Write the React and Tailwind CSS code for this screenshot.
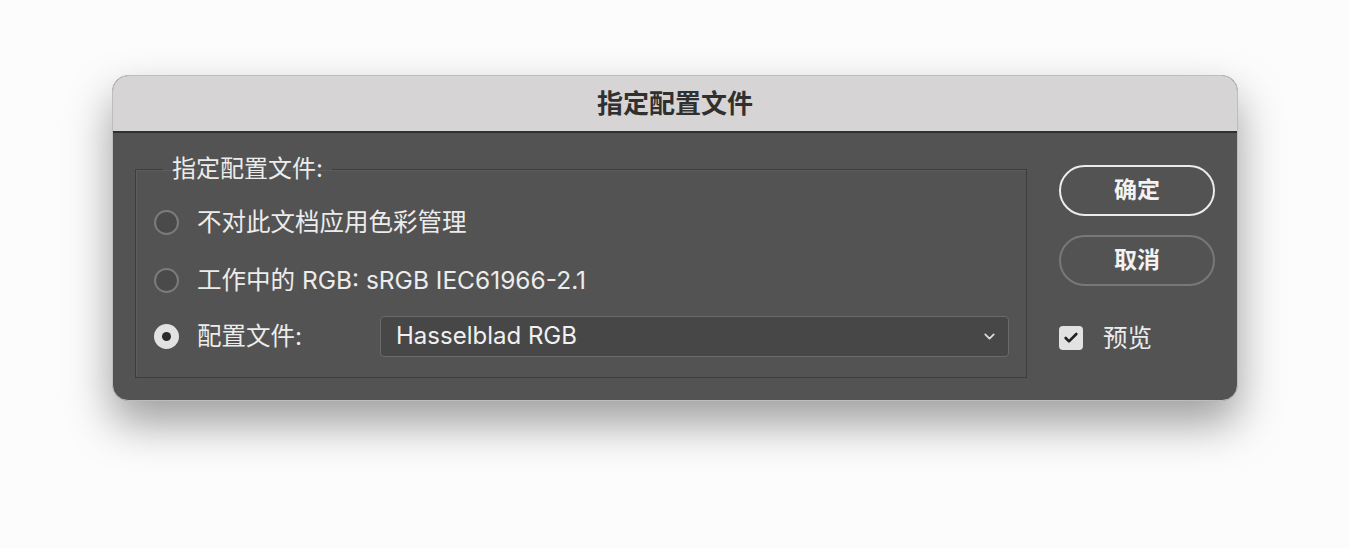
import React, { useState } from "react"
import { ChevronDown, Check } from "lucide-react"

const font = { fontFamily: 'Inter, "Noto Sans CJK SC", sans-serif' }

function Radio({ checked }) {
  return checked ? (
    <span className="flex h-[25px] w-[25px] shrink-0 items-center justify-center rounded-full bg-[#e2e2e2]">
      <span className="h-[9px] w-[9px] rounded-full bg-[#2b2b2b]" />
    </span>
  ) : (
    <span className="h-[25px] w-[25px] shrink-0 rounded-full border-2 border-[#7b7b7b] bg-[#4a4a4a]" />
  )
}

export default function App() {
  const [choice, setChoice] = useState(2)
  const [preview, setPreview] = useState(true)

  const rows = ["不对此文档应用色彩管理", "工作中的 RGB: sRGB IEC61966-2.1"]

  return (
    <div className="h-[548px] w-[1350px] bg-[#fcfcfc] pl-[112px] pt-[75px]" style={font}>
      <div className="w-[1126px] overflow-hidden rounded-[16px] border border-[#bdbdbd] bg-[#535353] shadow-[0_22px_45px_rgba(0,0,0,0.38)]">
        {/* Title bar */}
        <div className="flex h-[57px] items-center justify-center border-b-2 border-[#2f2f2f] bg-[#d6d4d5]">
          <h1 className="text-[26px] font-bold text-[#303030]">指定配置文件</h1>
        </div>

        <div className="flex px-[22px] pb-[22px] pt-[22px]">
          {/* Group */}
          <fieldset className="h-[223px] w-[894px] border border-[#3d3d3d] pl-[18px] shadow-[inset_1px_1px_0_#5d5d5d]">
            <legend className="ml-[9px] px-[9px] text-[24px] leading-[28px] text-[#ececec]">指定配置文件:</legend>
            <div className="flex flex-col pt-[10px]">
              {rows.map((label, i) => (
                <button
                  key={i}
                  onClick={() => setChoice(i)}
                  className="flex h-[58px] items-center gap-[18px] text-left text-[24.5px] text-[#ececec]"
                >
                  <Radio checked={choice === i} />
                  <span>{label}</span>
                </button>
              ))}
              <div className="flex h-[54px] items-center">
                <button
                  onClick={() => setChoice(2)}
                  className="flex w-[226px] items-center gap-[18px] text-[24.5px] text-[#ececec]"
                >
                  <Radio checked={choice === 2} />
                  <span>配置文件:</span>
                </button>
                <div className="flex h-[41px] w-[629px] items-center justify-between rounded-[4px] border border-[#6a6a6a] bg-[#474747] pl-[15px] pr-[10px]">
                  <span className="text-[24px] text-[#f0f0f0]">Hasselblad RGB</span>
                  <ChevronDown className="h-[17px] w-[17px] text-[#dcdcdc]" strokeWidth={2.5} />
                </div>
              </div>
            </div>
          </fieldset>

          {/* Actions */}
          <div className="ml-[32px] flex w-[156px] flex-col pt-[10px]">
            <button className="h-[51px] w-[156px] rounded-full border-2 border-[#ececec] text-[23px] font-semibold text-[#f2f2f2]">
              确定
            </button>
            <button className="mt-[19px] h-[51px] w-[156px] rounded-full border-2 border-[#787878] text-[23px] font-semibold text-[#f2f2f2]">
              取消
            </button>
            <button
              onClick={() => setPreview(!preview)}
              className="mt-[34px] flex items-center gap-[20px] text-[24.5px] text-[#ececec]"
            >
              <span className="flex h-[24px] w-[24px] items-center justify-center rounded-[4px] bg-[#e2e2e2]">
                {preview && <Check className="h-[16px] w-[16px] text-[#222]" strokeWidth={4} />}
              </span>
              <span>预览</span>
            </button>
          </div>
        </div>
      </div>
    </div>
  )
}
